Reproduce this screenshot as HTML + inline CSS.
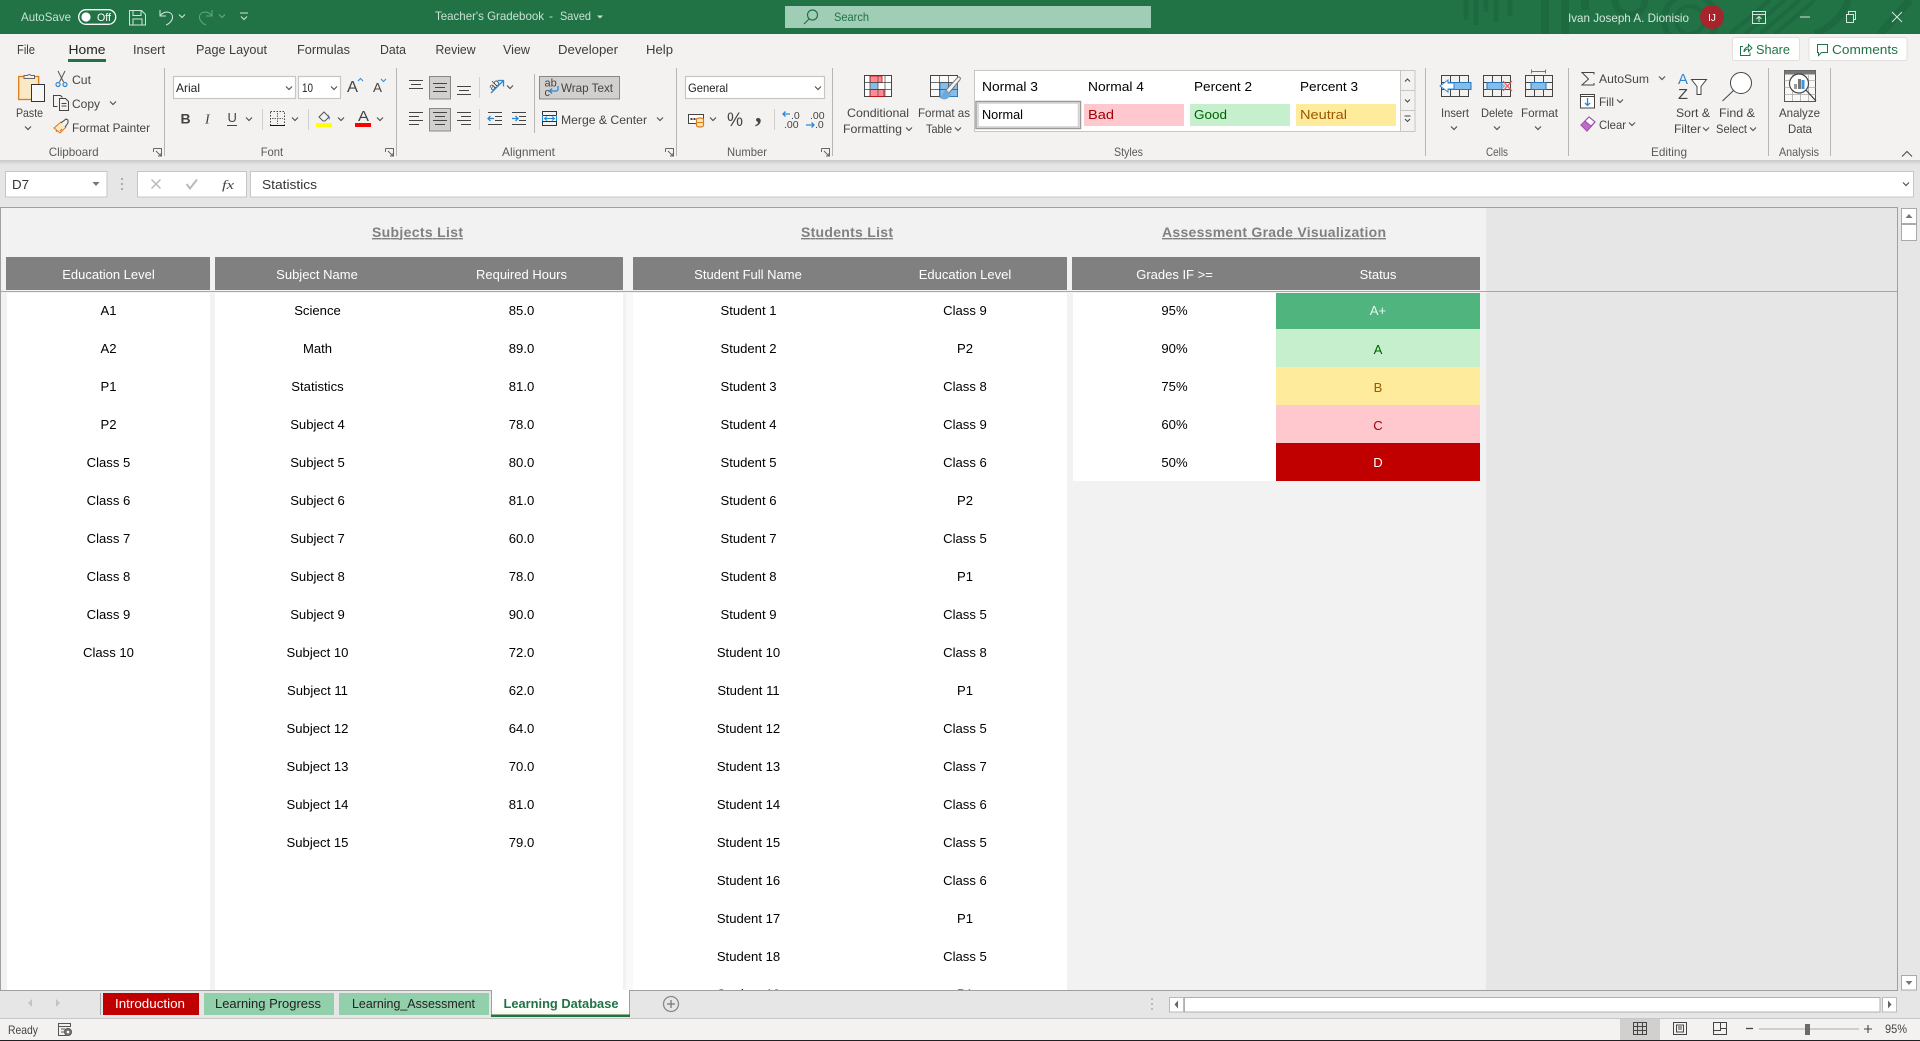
<!DOCTYPE html>
<html lang="en"><head><meta charset="utf-8"><title>Teacher's Gradebook - Excel</title>
<style>
html,body{margin:0;padding:0;width:1920px;height:1041px;overflow:hidden;background:#e6e6e6}
svg{display:block;font-family:"Liberation Sans",Arial,sans-serif}
.r{font-size:12px;fill:#444}
.l{font-size:12px;fill:#5a5a5a}
.t{font-size:12px;fill:#c9e0d3}
.m{font-size:13px;fill:#3c3c3c}
.d{font-size:13.1px;fill:#000;text-anchor:middle}
.h{font-size:13px;fill:#fff;text-anchor:middle}
.g{font-size:14px;font-weight:bold;fill:#808080;text-anchor:middle;text-decoration:underline}
.st{font-size:13px;fill:#000}
.ln{fill:none;stroke:#444;stroke-width:1}
.bl{fill:none;stroke:#2b88d8;stroke-width:1.3}
</style></head><body>
<svg width="1920" height="1041" viewBox="0 0 1920 1041" xmlns="http://www.w3.org/2000/svg">
<defs>
<path id="c" d="M-3 -1.5L0 1.5L3 -1.5" fill="none" stroke="#555" stroke-width="1.2"/>
<path id="cw" d="M-3 -1.5L0 1.5L3 -1.5" fill="none" stroke="#cfe3d8" stroke-width="1.1"/>
<path id="lc" d="M0.5 0.5H8.5V8.5M3 3L8 8M5 8H8V5M0.5 0.5V4M0.5 .5" fill="none" stroke="#666" stroke-width="1"/>
</defs>

<!-- title bar -->
<rect width="1920" height="34" fill="#217346"/>
<g fill="none" stroke="#1e6a40" stroke-width="5">
<path d="M1466 0V20M1476 0V25M1486 0V12M1496 0V22M1510 0V16"/>
<path d="M1545 0V34M1565 0V34M1585 0V10" stroke-width="8"/>
<path d="M1615 0a15 15 0 0 0 30 0" stroke-width="7"/>
<circle cx="1690" cy="20" r="26" stroke-width="6"/>
<circle cx="1690" cy="20" r="14" stroke-width="4"/>
<path d="M1730 34L1770 0M1745 34L1785 0M1760 34L1800 0M1775 34L1815 0" stroke-width="4"/>
<path d="M1815 34C1835 25 1845 12 1848 0" stroke-width="7"/>
<path d="M1880 34L1910 0" stroke-width="8"/>
</g>
<text class="t" x="21" y="21" textLength="50" lengthAdjust="spacingAndGlyphs">AutoSave</text>
<rect x="78.7" y="9.7" width="37" height="14.6" rx="7.3" fill="none" stroke="#fff" stroke-width="1.3"/>
<circle cx="86" cy="17" r="4.6" fill="#fff"/>
<text x="97" y="21" font-size="11" fill="#fff" textLength="14" lengthAdjust="spacingAndGlyphs">Off</text>
<path d="M129.5 10.5h12l4 4v10.5h-16zM133 10.5v5h8v-5M133 25v-6h9v6" fill="none" stroke="#cfe3d8"/>
<path d="M160 10v6h6M160 16C164 10 173 11 172.500 18C172 21 169 24 166 25" fill="none" stroke="#cfe3d8" stroke-width="1.1"/>
<use href="#cw" x="182" y="16"/>
<path d="M212 10v6h-6M212 16C208 10 199 11 199.500 18C200 21 203 24 206 25" fill="none" stroke="#63a382" stroke-width="1.1"/>
<use href="#cw" x="222" y="16" opacity=".45"/>
<path d="M240 13h8" stroke="#cfe3d8"/><use href="#cw" x="244" y="18"/>
<text class="t" x="435" y="20" textLength="109" lengthAdjust="spacingAndGlyphs">Teacher's Gradebook</text>
<text class="t" x="549" y="20">-</text>
<text class="t" x="560" y="20" textLength="31" lengthAdjust="spacingAndGlyphs">Saved</text>
<path d="M597 15.500h6l-3 3z" fill="#cfe3d8"/>
<rect x="785" y="6" width="366" height="22" fill="#a0cdb5"/>
<circle cx="812.500" cy="15" r="5" fill="none" stroke="#217346" stroke-width="1.2"/>
<path d="M809 19l-5 5" stroke="#217346" stroke-width="1.2"/>
<text x="834" y="21" font-size="12" fill="#217346" textLength="35" lengthAdjust="spacingAndGlyphs">Search</text>
<text x="1568" y="22" font-size="12" fill="#d5e6dc" textLength="121" lengthAdjust="spacingAndGlyphs">Ivan Joseph A. Dionisio</text>
<circle cx="1712" cy="17" r="12" fill="#a4262c"/>
<text x="1712" y="21" font-size="10" fill="#fff" text-anchor="middle">IJ</text>
<path d="M1752.500 11.500h13v12h-13zM1752.500 14.500h13M1759 22v-5M1756.500 19l2.500-2.500 2.500 2.500" fill="none" stroke="#d5e6dc"/>
<path d="M1800 17h10" stroke="#d5e6dc"/>
<path d="M1846.500 14.500h7v8h-7zM1848.500 14v-2.500h7v8h-2" fill="none" stroke="#d5e6dc"/>
<path d="M1892 12l10 10M1902 12l-10 10" stroke="#d5e6dc"/>

<!-- ribbon -->
<rect y="34" width="1920" height="126" fill="#f3f2f1"/>
<linearGradient id="sh" x1="0" y1="0" x2="0" y2="1"><stop offset="0" stop-color="#c9c9c9"/><stop offset="1" stop-color="#e6e6e6"/></linearGradient>
<rect y="160" width="1920" height="5" fill="url(#sh)"/>
<g class="m">
<text class="m" x="17" y="54" textLength="18" lengthAdjust="spacingAndGlyphs">File</text>
<text class="m" x="68.500" y="54" textLength="37" lengthAdjust="spacingAndGlyphs" style="fill:#222">Home</text>
<text class="m" x="133" y="54" textLength="32" lengthAdjust="spacingAndGlyphs">Insert</text>
<text class="m" x="196" y="54" textLength="71" lengthAdjust="spacingAndGlyphs">Page Layout</text>
<text class="m" x="297" y="54" textLength="53" lengthAdjust="spacingAndGlyphs">Formulas</text>
<text class="m" x="380" y="54" textLength="26" lengthAdjust="spacingAndGlyphs">Data</text>
<text class="m" x="435.500" y="54" textLength="40" lengthAdjust="spacingAndGlyphs">Review</text>
<text class="m" x="503" y="54" textLength="27" lengthAdjust="spacingAndGlyphs">View</text>
<text class="m" x="558" y="54" textLength="60" lengthAdjust="spacingAndGlyphs">Developer</text>
<text class="m" x="646" y="54" textLength="27" lengthAdjust="spacingAndGlyphs">Help</text>
</g>
<rect x="68" y="59" width="38" height="3" fill="#217346"/>
<rect x="1732.500" y="37.500" width="67" height="23" rx="2" fill="#fff" stroke="#e1dfdd"/>
<rect x="1809" y="37.500" width="98" height="23" rx="2" fill="#fff" stroke="#e1dfdd"/>
<path d="M1743 46.500h-2.500v9h9.500v-3M1744 52c0-3 2-5 4.500-5v-2.500l3.500 3.500-3.500 3.500v-2.500c-2 0-3.500 1-4.500 3z" fill="none" stroke="#217346"/>
<text x="1756" y="54" font-size="13" fill="#217346" textLength="34" lengthAdjust="spacingAndGlyphs">Share</text>
<path d="M1817.500 44.500h10v8h-6l-3 3v-3h-1z" fill="none" stroke="#217346"/>
<text x="1832" y="54" font-size="13" fill="#217346" textLength="66" lengthAdjust="spacingAndGlyphs">Comments</text>

<!-- separators -->
<g stroke="#b8b6b4">
<path d="M164.500 68V156M396.500 68V156M676.500 68V156M832.500 68V156M1425.500 68V156M1568.500 68V156M1768.500 68V156M1830.500 68V156"/>
<path d="M534.500 74V133" />
<path d="M262.500 109V130M308.500 109V130M479.500 77V98M479.500 109V130M774.500 109V130" stroke="#d2d0ce"/>
</g>

<!-- clipboard -->
<rect x="18.700" y="76.500" width="20" height="23" fill="#fbe8c4" stroke="#e07b14" stroke-width="1.3"/>
<rect x="31.500" y="84.500" width="13" height="17" fill="#f7f7f7" stroke="#333"/>
<path d="M24 78.500v-3h3.500a2 2 0 0 1 3.500 0h3.500v3z" fill="#f3f2f1" stroke="#666"/>
<text class="r" x="16" y="117" textLength="27" lengthAdjust="spacingAndGlyphs">Paste</text>
<use href="#c" x="28" y="128"/>
<path d="M58 71l5.500 11M65 71l-5.500 11" stroke="#555" fill="none"/>
<circle cx="58" cy="84.500" r="2" fill="none" stroke="#2b88d8" stroke-width="1.2"/>
<circle cx="65" cy="84.500" r="2" fill="none" stroke="#2b88d8" stroke-width="1.2"/>
<text class="r" x="72" y="84" textLength="19" lengthAdjust="spacingAndGlyphs">Cut</text>
<path d="M57.500 106.500h-4v-11h7l2 2M59.500 98.500h6l3 3v9h-9zM61.500 103.500h5M61.500 106h5" fill="none" stroke="#444"/>
<text class="r" x="72" y="108" textLength="28" lengthAdjust="spacingAndGlyphs">Copy</text>
<use href="#c" x="113" y="103"/>
<path d="M54 128l7-6 5 5-6 6z" fill="#fbe8c4" stroke="#d9731a"/>
<path d="M57 130l-1 2M60 131l2-2" stroke="#d9731a"/>
<path d="M61 123l5-4 2 1 0 3-3 4" fill="#f3f2f1" stroke="#444"/>
<text class="r" x="72" y="132" textLength="78" lengthAdjust="spacingAndGlyphs">Format Painter</text>
<text class="l" x="48.700" y="156" textLength="50" lengthAdjust="spacingAndGlyphs">Clipboard</text>
<use href="#lc" x="153" y="148"/>

<!-- font -->
<rect x="173.500" y="76.500" width="122" height="22" fill="#fff" stroke="#c8c6c4" stroke-width="1.2"/>
<text x="176" y="92" font-size="12" fill="#222" textLength="24" lengthAdjust="spacingAndGlyphs">Arial</text>
<use href="#c" x="289" y="88"/>
<rect x="298.500" y="76.500" width="42" height="22" fill="#fff" stroke="#c8c6c4" stroke-width="1.2"/>
<text x="302" y="92" font-size="12" fill="#222" textLength="11" lengthAdjust="spacingAndGlyphs">10</text>
<use href="#c" x="334" y="88"/>
<text x="347" y="92" font-size="16" fill="#444" textLength="11" lengthAdjust="spacingAndGlyphs">A</text>
<path d="M358 81l2.500-2.500 2.500 2.500" fill="none" stroke="#2b88d8"/>
<text x="373" y="92" font-size="13" fill="#444" textLength="9" lengthAdjust="spacingAndGlyphs">A</text>
<path d="M381 79l2.500 2.500 2.500-2.500" fill="none" stroke="#2b88d8"/>
<text x="180.500" y="123.500" font-size="14" font-weight="bold" fill="#444">B</text>
<text x="205" y="123.500" font-size="14" font-style="italic" fill="#444" font-family="Liberation Serif">I</text>
<text x="227.500" y="122" font-size="13" fill="#444">U</text><path d="M227 125.500h10" stroke="#444"/>
<use href="#c" x="249" y="119"/>
<path d="M270.500 111.500h14v14h-14z" fill="none" stroke="#444" stroke-dasharray="1.500 1.500"/>
<path d="M270 125.500h15" stroke="#111"/>
<path d="M277.500 113v11M272 118.500h11" stroke="#666" stroke-dasharray="1.500 1"/>
<use href="#c" x="295" y="119"/>
<path d="M319 117l5-5 5 5-4 4h-2z" fill="none" stroke="#555"/>
<path d="M328 114l2 4-1 2z" fill="#2b6ca8"/>
<rect x="316" y="123" width="16" height="4" fill="#ffff00"/>
<use href="#c" x="341" y="119"/>
<text x="358" y="121" font-size="15" fill="#444" textLength="11" lengthAdjust="spacingAndGlyphs">A</text>
<rect x="355" y="123" width="16" height="4" fill="#f00"/>
<use href="#c" x="380" y="119"/>
<text class="l" x="260.700" y="156" textLength="22.500" lengthAdjust="spacingAndGlyphs">Font</text>
<use href="#lc" x="385" y="148"/>

<!-- alignment -->
<rect x="429.500" y="76.500" width="21" height="22.500" fill="#d2d0ce" stroke="#8a8886"/>
<rect x="429.500" y="108.500" width="21" height="22.500" fill="#d2d0ce" stroke="#8a8886"/>
<rect x="539.500" y="76.500" width="80" height="22.500" fill="#d2d0ce" stroke="#8a8886"/>
<path class="ln" d="M409 80.500h14M411 84.500h10M409 88.500h14
M433 83.500h14M435 87.500h10M433 91.500h14
M457 86.500h14M459 90.500h10M457 94.500h14
M409 112.500h14M409 116.500h10M409 120.500h14M409 124.500h10
M433 112.500h14M435 116.500h10M433 120.500h14M435 124.500h10
M457 112.500h14M461 116.500h10M457 120.500h14M461 124.500h10
M488 112.500h14M495 116.500h7M495 120.500h7M488 124.500h14
M512 112.500h14M519 116.500h7M519 120.500h7M512 124.500h14"/>
<path class="bl" d="M488 118.500h6M490.500 116l-2.500 2.500 2.500 2.500M512 118.500h6M515.500 116l2.500 2.500-2.500 2.500"/>
<text x="487" y="90" font-size="10" fill="#444" transform="rotate(-45 491 84)">ab</text>
<path class="bl" d="M491 93l12-12M497.500 80.500h6v6"/>
<use href="#c" x="510" y="87"/>
<text x="544.500" y="86.500" font-size="11" fill="#444">ab</text>
<text x="544.500" y="96" font-size="11" fill="#444">c</text>
<path class="bl" d="M558 86v3a2 2 0 0 1-2 2h-6M552 88.500l-2.500 2.500 2.500 2.500"/>
<text class="r" x="561" y="92" textLength="52" lengthAdjust="spacingAndGlyphs">Wrap Text</text>
<path class="ln" d="M542.500 111.500h14v14h-14zM542.500 115.500h14M542.500 121.500h14" style="stroke:#333"/>
<path d="M545 118.500h9M547 116.500l-2.500 2 2.500 2M552 116.500l2.500 2-2.500 2" fill="none" stroke="#1f8ad6"/>
<path d="M542.500 115v6M556.500 115v6" stroke="#1f8ad6"/>
<text class="r" x="561" y="124" textLength="86" lengthAdjust="spacingAndGlyphs">Merge &amp; Center</text>
<use href="#c" x="660" y="119"/>
<text class="l" x="502" y="156" textLength="53" lengthAdjust="spacingAndGlyphs">Alignment</text>
<use href="#lc" x="665" y="148"/>

<!-- number -->
<rect x="685.500" y="76.500" width="139" height="22" fill="#fff" stroke="#c8c6c4" stroke-width="1.2"/>
<text x="688" y="92" font-size="12" fill="#222" textLength="40" lengthAdjust="spacingAndGlyphs">General</text>
<use href="#c" x="818" y="88"/>
<rect x="688.500" y="114.500" width="15" height="9" fill="#fff" stroke="#444"/>
<path d="M690.500 119h11" stroke="#444" stroke-width="2" stroke-dasharray="2 1"/>
<path d="M696.500 119.500a3.500 1.500 0 0 1 7 0v6a3.500 1.500 0 0 1-7 0z" fill="#fbe8c4" stroke="#e07b14" stroke-width="1.200"/>
<path d="M696.500 122.500h7" stroke="#e07b14"/>
<use href="#c" x="713" y="119"/>
<text x="727" y="126" font-size="19" fill="#444" textLength="16" lengthAdjust="spacingAndGlyphs">%</text>
<text x="755" y="122" font-size="27" font-weight="bold" fill="#444" font-family="Liberation Serif">,</text>
<text x="791" y="119" font-size="10.500" fill="#444">.0</text>
<text x="784" y="128" font-size="10.500" fill="#444">.00</text>
<path class="bl" d="M783 114h7M785.500 111.500l-2.500 2.500 2.500 2.500"/>
<text x="810" y="119" font-size="10.500" fill="#444">.00</text>
<text x="815" y="128" font-size="10.500" fill="#444">.0</text>
<path class="bl" d="M806 125h8M811.500 122.500l2.500 2.500-2.500 2.500"/>
<text class="l" x="727" y="156" textLength="40" lengthAdjust="spacingAndGlyphs">Number</text>
<use href="#lc" x="821" y="148"/>

<!-- conditional / format table -->
<rect x="864.500" y="75.500" width="27" height="21" fill="#fff" stroke="#444"/>
<rect x="870" y="76" width="12" height="6.500" fill="#ff8a94" stroke="#c00" stroke-width=".8"/>
<rect x="870" y="82.500" width="8" height="7" fill="#85bde8"/>
<rect x="870" y="89.500" width="14" height="7" fill="#ff8a94" stroke="#c00" stroke-width=".8"/>
<path d="M864.500 82.500h27M864.500 89.500h27M870 75.500v21M878 75.500v21M885 75.500v21" stroke="#444" stroke-width=".7" fill="none"/>
<text class="r" x="847" y="117" textLength="62" lengthAdjust="spacingAndGlyphs">Conditional</text>
<text class="r" x="843" y="133" textLength="59" lengthAdjust="spacingAndGlyphs">Formatting</text>
<use href="#c" x="909" y="129"/>
<rect x="930.500" y="75.500" width="27" height="21" fill="#fafafa" stroke="#444"/>
<rect x="940" y="82.500" width="17.500" height="14" fill="#85bde8" stroke="#1e78c4" stroke-width=".8"/>
<path d="M930.500 82.500h27M930.500 89.500h27M939.500 75.500v21M948.500 75.500v21" stroke="#444" stroke-width=".7" fill="none"/>
<path d="M958 77c3 0 3 2 1 4l-10 12-3-3z" fill="#f3f2f1" stroke="#777"/>
<path d="M946 90c-3 1-2 5-7 7 4 4 10 3 12-3z" fill="#6ea9da"/>
<text class="r" x="918" y="117" textLength="52" lengthAdjust="spacingAndGlyphs">Format as</text>
<text class="r" x="926" y="133" textLength="26" lengthAdjust="spacingAndGlyphs">Table</text>
<use href="#c" x="958" y="129"/>

<!-- styles gallery -->
<rect x="974.500" y="70.500" width="440.500" height="61" fill="#fff" stroke="#c8c6c4"/>
<text class="st" x="982" y="91" textLength="56" lengthAdjust="spacingAndGlyphs">Normal 3</text>
<text class="st" x="1088" y="91" textLength="56" lengthAdjust="spacingAndGlyphs">Normal 4</text>
<text class="st" x="1194" y="91" textLength="58" lengthAdjust="spacingAndGlyphs">Percent 2</text>
<text class="st" x="1300" y="91" textLength="58" lengthAdjust="spacingAndGlyphs">Percent 3</text>
<rect x="976" y="101.500" width="104.500" height="27" fill="#fff" stroke="#9a9a9a" stroke-width="1.500"/>
<rect x="978" y="103" width="100.500" height="24" fill="none" stroke="#d2d0ce" stroke-width="1.500"/>
<text class="st" x="982" y="119" textLength="41" lengthAdjust="spacingAndGlyphs">Normal</text>
<rect x="1084" y="104" width="100" height="22" fill="#ffc7ce"/>
<text class="st" x="1088" y="119" textLength="26" lengthAdjust="spacingAndGlyphs" style="fill:#9c0006">Bad</text>
<rect x="1190" y="104" width="100" height="22" fill="#c6efce"/>
<text class="st" x="1194" y="119" textLength="33" lengthAdjust="spacingAndGlyphs" style="fill:#006100">Good</text>
<rect x="1296" y="104" width="100" height="22" fill="#ffeb9c"/>
<text class="st" x="1300" y="119" textLength="47" lengthAdjust="spacingAndGlyphs" style="fill:#9c5700">Neutral</text>
<g fill="#f3f2f1" stroke="#c8c6c4">
<rect x="1400.500" y="70.500" width="14.500" height="20"/>
<rect x="1400.500" y="90.500" width="14.500" height="20"/>
<rect x="1400.500" y="110.500" width="14.500" height="21"/>
</g>
<path d="M1405 81.500l2.500-2.500 2.500 2.500M1405 99.500l2.500 2.500 2.500-2.500M1405 119l2.500 2.500 2.500-2.500" fill="none" stroke="#444"/>
<path d="M1404.500 116h6" stroke="#444"/>
<text class="l" x="1114" y="156" textLength="29" lengthAdjust="spacingAndGlyphs">Styles</text>

<!-- cells -->
<g fill="none" stroke="#444">
<path d="M1441.500 75.500h27v21h-27zM1441.500 82.500h27M1441.500 89.500h27M1450.500 75.500v21M1459.500 75.500v21"/>
<path d="M1483.500 75.500h27v21h-27zM1483.500 82.500h27M1483.500 89.500h27M1492.500 75.500v21M1501.500 75.500v21"/>
<path d="M1525.500 75.500h27v21h-27zM1525.500 82.500h27M1525.500 89.500h27M1534.500 75.500v21M1543.500 75.500v21"/>
</g>
<rect x="1448" y="82.500" width="23" height="7" fill="#85bde8" stroke="#1e78c4"/>
<path d="M1448 80l-8 6 8 6v-3h6v-6h-6z" fill="#fff" stroke="#2b88d8"/>
<rect x="1487" y="82.500" width="15" height="7" fill="#85bde8" stroke="#1e78c4"/>
<path d="M1502 82.500l4 3.500-4 3.500z" fill="#85bde8"/>
<path d="M1503 81l9 10M1512 81l-9 10" stroke="#ee5a5a" stroke-width="1.200"/>
<rect x="1531" y="82.500" width="15" height="7" fill="#85bde8" stroke="#1e78c4"/>
<path d="M1531 71.500h15M1531.500 69.500v4M1545.500 69.500v4" stroke="#2b88d8"/>
<text class="r" x="1441" y="117" textLength="28" lengthAdjust="spacingAndGlyphs">Insert</text>
<use href="#c" x="1454" y="128"/>
<text class="r" x="1481" y="117" textLength="32" lengthAdjust="spacingAndGlyphs">Delete</text>
<use href="#c" x="1497" y="128"/>
<text class="r" x="1521" y="117" textLength="37" lengthAdjust="spacingAndGlyphs">Format</text>
<use href="#c" x="1538" y="128"/>
<text class="l" x="1486" y="156" textLength="22" lengthAdjust="spacingAndGlyphs">Cells</text>

<!-- editing -->
<path d="M1594 74.500v-2h-12l6.500 6.500-6.500 6h12v-2" fill="none" stroke="#444"/>
<text class="r" x="1599" y="83" textLength="50" lengthAdjust="spacingAndGlyphs">AutoSum</text>
<use href="#c" x="1662" y="78"/>
<rect x="1580.500" y="94.500" width="14" height="13.500" fill="#fff" stroke="#444"/>
<path d="M1580.500 96.500h14" stroke="#444"/>
<path class="bl" d="M1587.500 98v7.500M1585 103l2.500 2.500 2.500-2.500"/>
<text class="r" x="1599" y="106" textLength="15" lengthAdjust="spacingAndGlyphs">Fill</text>
<use href="#c" x="1620" y="101"/>
<path d="M1581 125l8-8 6 5-8 9z" fill="#d9a8de" stroke="#a347b0" stroke-width="1.200"/>
<path d="M1586 120l6 5-5 6-6-6z" fill="#b45fc0" opacity=".8"/>
<path d="M1589 117l6 5-4 4-6-5z" fill="#fff" stroke="#a347b0"/>
<text class="r" x="1599" y="129" textLength="27" lengthAdjust="spacingAndGlyphs">Clear</text>
<use href="#c" x="1632" y="124"/>
<text x="1678" y="84" font-size="15" fill="#2b88d8" textLength="10" lengthAdjust="spacingAndGlyphs">A</text>
<text x="1678" y="99" font-size="15" fill="#444" textLength="10" lengthAdjust="spacingAndGlyphs">Z</text>
<path d="M1691.500 79.500h15l-5.500 7v8h-4v-8z" fill="#fff" stroke="#444"/>
<text class="r" x="1676" y="117" textLength="34" lengthAdjust="spacingAndGlyphs">Sort &amp;</text>
<text class="r" x="1674" y="133" textLength="27" lengthAdjust="spacingAndGlyphs">Filter</text>
<use href="#c" x="1706" y="129"/>
<circle cx="1741" cy="83" r="10.500" fill="#fff" stroke="#444"/>
<path d="M1733.500 90.500l-11 10.500" stroke="#444"/>
<text class="r" x="1719" y="117" textLength="36" lengthAdjust="spacingAndGlyphs">Find &amp;</text>
<text class="r" x="1716" y="133" textLength="31" lengthAdjust="spacingAndGlyphs">Select</text>
<use href="#c" x="1753" y="129"/>
<text class="l" x="1651" y="156" textLength="36" lengthAdjust="spacingAndGlyphs">Editing</text>

<!-- analyze -->
<rect x="1784.500" y="70.500" width="31" height="31" fill="#f8f8f8" stroke="#555"/>
<rect x="1784.500" y="70.500" width="31" height="4" fill="#777"/>
<path d="M1784.500 80.500h31M1784.500 87.500h31M1784.500 94.500h31M1792.500 75v26M1800.500 75v26M1808.500 75v26" stroke="#aaa" stroke-width=".8"/>
<circle cx="1799" cy="83.500" r="9.500" fill="#fff" stroke="#444" stroke-width="1.200"/>
<rect x="1794" y="84" width="3" height="5" fill="#999"/><rect x="1798" y="79" width="3" height="10" fill="#777"/><rect x="1801.500" y="80" width="3" height="9" fill="#3a96dd"/>
<path d="M1806 90l10 11" stroke="#444" stroke-width="1.300"/>
<text class="r" x="1779" y="117" textLength="41" lengthAdjust="spacingAndGlyphs">Analyze</text>
<text class="r" x="1788" y="133" textLength="24" lengthAdjust="spacingAndGlyphs">Data</text>
<text class="l" x="1779" y="156" textLength="40" lengthAdjust="spacingAndGlyphs">Analysis</text>
<path d="M1902 156.500l5-5 5 5" fill="none" stroke="#444"/>

<!-- formula bar -->
<rect x="5.500" y="171.500" width="101.500" height="25.500" fill="#fff" stroke="#c8c6c4"/>
<text x="12" y="189" font-size="13" fill="#333" textLength="17" lengthAdjust="spacingAndGlyphs">D7</text>
<path d="M92.500 182h7l-3.500 4z" fill="#777"/>
<path d="M122 178v2M122 183v2M122 188v2" stroke="#999" stroke-width="1.500"/>
<rect x="137.500" y="171.500" width="109" height="25.500" fill="#fff" stroke="#c8c6c4"/>
<path d="M151.500 179.500l9 9M160.500 179.500l-9 9" stroke="#bbb" stroke-width="1.500"/>
<path d="M186.500 184l3.500 4.500 7-9" fill="none" stroke="#bbb" stroke-width="2"/>
<text x="222" y="189" font-size="13" font-style="italic" font-family="Liberation Serif" fill="#444" textLength="12" lengthAdjust="spacingAndGlyphs">fx</text>
<rect x="250.500" y="171.500" width="1663" height="25.500" fill="#fff" stroke="#c8c6c4"/>
<text x="262" y="189" font-size="13" fill="#333" textLength="55" lengthAdjust="spacingAndGlyphs">Statistics</text>
<use href="#c" x="1906" y="184"/>

<!-- sheet -->
<rect x="0" y="207" width="1898" height="784" fill="#e6e6e6"/>
<rect x="1" y="208" width="1485" height="782" fill="#f2f2f2"/>
<path d="M0 207.500H1898M0.500 207V990M1897.500 207V990" stroke="#a0a0a0"/>
<rect x="7" y="293" width="203" height="697" fill="#fff"/>
<rect x="215" y="293" width="408" height="697" fill="#fff"/>
<rect x="626" y="293" width="7" height="697" fill="#f9f9f9"/>
<rect x="633" y="293" width="434" height="697" fill="#fff"/>
<rect x="1073" y="293" width="203" height="188" fill="#fff"/>
<rect x="1276" y="293" width="204" height="36" fill="#50b47f"/>
<rect x="1276" y="329" width="204" height="38" fill="#c6efce"/>
<rect x="1276" y="367" width="204" height="38" fill="#ffeb9c"/>
<rect x="1276" y="405" width="204" height="38" fill="#ffc7ce"/>
<rect x="1276" y="443" width="204" height="38" fill="#c00000"/>
<g fill="#808080">
<rect x="6" y="257" width="204" height="33"/>
<rect x="215" y="257" width="408" height="33"/>
<rect x="633" y="257" width="434" height="33"/>
<rect x="1072" y="257" width="408" height="33"/>
</g>
<path d="M1 291.500H1897" stroke="#a8a8a8"/>

<text class="g" x="417.500" y="237" textLength="91" lengthAdjust="spacing">Subjects List</text>
<text class="g" x="847" y="237" textLength="92" lengthAdjust="spacing">Students List</text>
<text class="g" x="1274" y="237" textLength="224" lengthAdjust="spacing">Assessment Grade Visualization</text>

<text class="h" x="108.500" y="279">Education Level</text>
<text class="h" x="317" y="279">Subject Name</text>
<text class="h" x="521.500" y="279">Required Hours</text>
<text class="h" x="748" y="279">Student Full Name</text>
<text class="h" x="965" y="279">Education Level</text>
<text class="h" x="1174.500" y="279">Grades IF &gt;=</text>
<text class="h" x="1378" y="279">Status</text>

<g class="d">
<text class="d" x="108.500" y="315">A1</text><text class="d" x="108.500" y="353">A2</text><text class="d" x="108.500" y="391">P1</text><text class="d" x="108.500" y="429">P2</text><text class="d" x="108.500" y="467">Class 5</text><text class="d" x="108.500" y="505">Class 6</text><text class="d" x="108.500" y="543">Class 7</text><text class="d" x="108.500" y="581">Class 8</text><text class="d" x="108.500" y="619">Class 9</text><text class="d" x="108.500" y="657">Class 10</text>

<text class="d" x="317.500" y="315">Science</text><text class="d" x="317.500" y="353">Math</text><text class="d" x="317.500" y="391">Statistics</text><text class="d" x="317.500" y="429">Subject 4</text><text class="d" x="317.500" y="467">Subject 5</text><text class="d" x="317.500" y="505">Subject 6</text><text class="d" x="317.500" y="543">Subject 7</text><text class="d" x="317.500" y="581">Subject 8</text><text class="d" x="317.500" y="619">Subject 9</text><text class="d" x="317.500" y="657">Subject 10</text><text class="d" x="317.500" y="695">Subject 11</text><text class="d" x="317.500" y="733">Subject 12</text><text class="d" x="317.500" y="771">Subject 13</text><text class="d" x="317.500" y="809">Subject 14</text><text class="d" x="317.500" y="847">Subject 15</text>

<text class="d" x="521.500" y="315">85.0</text><text class="d" x="521.500" y="353">89.0</text><text class="d" x="521.500" y="391">81.0</text><text class="d" x="521.500" y="429">78.0</text><text class="d" x="521.500" y="467">80.0</text><text class="d" x="521.500" y="505">81.0</text><text class="d" x="521.500" y="543">60.0</text><text class="d" x="521.500" y="581">78.0</text><text class="d" x="521.500" y="619">90.0</text><text class="d" x="521.500" y="657">72.0</text><text class="d" x="521.500" y="695">62.0</text><text class="d" x="521.500" y="733">64.0</text><text class="d" x="521.500" y="771">70.0</text><text class="d" x="521.500" y="809">81.0</text><text class="d" x="521.500" y="847">79.0</text>

<text class="d" x="748.500" y="315">Student 1</text><text class="d" x="748.500" y="353">Student 2</text><text class="d" x="748.500" y="391">Student 3</text><text class="d" x="748.500" y="429">Student 4</text><text class="d" x="748.500" y="467">Student 5</text><text class="d" x="748.500" y="505">Student 6</text><text class="d" x="748.500" y="543">Student 7</text><text class="d" x="748.500" y="581">Student 8</text><text class="d" x="748.500" y="619">Student 9</text><text class="d" x="748.500" y="657">Student 10</text><text class="d" x="748.500" y="695">Student 11</text><text class="d" x="748.500" y="733">Student 12</text><text class="d" x="748.500" y="771">Student 13</text><text class="d" x="748.500" y="809">Student 14</text><text class="d" x="748.500" y="847">Student 15</text><text class="d" x="748.500" y="885">Student 16</text><text class="d" x="748.500" y="923">Student 17</text><text class="d" x="748.500" y="961">Student 18</text><text class="d" x="748.500" y="998.500">Student 19</text>

<text class="d" x="965" y="315">Class 9</text><text class="d" x="965" y="353">P2</text><text class="d" x="965" y="391">Class 8</text><text class="d" x="965" y="429">Class 9</text><text class="d" x="965" y="467">Class 6</text><text class="d" x="965" y="505">P2</text><text class="d" x="965" y="543">Class 5</text><text class="d" x="965" y="581">P1</text><text class="d" x="965" y="619">Class 5</text><text class="d" x="965" y="657">Class 8</text><text class="d" x="965" y="695">P1</text><text class="d" x="965" y="733">Class 5</text><text class="d" x="965" y="771">Class 7</text><text class="d" x="965" y="809">Class 6</text><text class="d" x="965" y="847">Class 5</text><text class="d" x="965" y="885">Class 6</text><text class="d" x="965" y="923">P1</text><text class="d" x="965" y="961">Class 5</text><text class="d" x="965" y="998.500">P1</text>

<text class="d" x="1174.500" y="315">95%</text><text class="d" x="1174.500" y="353">90%</text><text class="d" x="1174.500" y="391">75%</text><text class="d" x="1174.500" y="429">60%</text><text class="d" x="1174.500" y="467">50%</text>
</g>
<text class="d" x="1378" y="315" style="fill:#e8f8ee">A+</text>
<text class="d" x="1378" y="354" style="fill:#006100">A</text>
<text class="d" x="1378" y="392" style="fill:#9c5700">B</text>
<text class="d" x="1378" y="430" style="fill:#9c0006">C</text>
<text class="d" x="1378" y="467" style="fill:#fff">D</text>

<!-- vertical scrollbar -->
<rect x="1898" y="207" width="22" height="784" fill="#e6e6e6"/>
<rect x="1901.500" y="208.500" width="15" height="15" fill="#fff" stroke="#aaa"/>
<path d="M1905.500 218l3.500-4 3.500 4z" fill="#777"/>
<rect x="1901.500" y="224.500" width="15" height="16" fill="#fff" stroke="#aaa"/>
<rect x="1901.500" y="975.500" width="15" height="14.500" fill="#fff" stroke="#aaa"/>
<path d="M1905.500 981l3.500 4 3.500-4z" fill="#777"/>

<!-- sheet tabs -->
<rect y="991" width="1920" height="27" fill="#e6e6e6"/>
<path d="M0 990.500H1898" stroke="#a0a0a0"/>
<path d="M32 999v8l-4-4zM56 999v8l4-4z" fill="#c4c4c4"/>
<path d="M100.500 993V1015" stroke="#a8a8a8"/>
<rect x="103" y="993" width="96" height="22" fill="#c00000"/>
<text x="115" y="1008" font-size="13" fill="#fff" textLength="70" lengthAdjust="spacingAndGlyphs">Introduction</text>
<rect x="204" y="993" width="130" height="22" fill="#92d0ac"/>
<text x="215" y="1008" font-size="13" fill="#222" textLength="106" lengthAdjust="spacingAndGlyphs">Learning Progress</text>
<rect x="339" y="993" width="150" height="22" fill="#92d0ac"/>
<text x="352" y="1008" font-size="13" fill="#222" textLength="123" lengthAdjust="spacingAndGlyphs">Learning_Assessment</text>
<linearGradient id="at" x1="0" y1="0" x2="0" y2="1"><stop offset="0" stop-color="#fff"/><stop offset=".7" stop-color="#fff"/><stop offset="1" stop-color="#fdf3df"/></linearGradient>
<rect x="491.500" y="990" width="138" height="26" fill="url(#at)"/>
<path d="M491.500 1016V990M629.500 1016V990" stroke="#a0a0a0"/>
<rect x="491" y="1014.500" width="139" height="2.500" fill="#217346"/>
<text x="503.500" y="1008" font-size="13" font-weight="bold" fill="#217346" textLength="115" lengthAdjust="spacingAndGlyphs">Learning Database</text>
<circle cx="671" cy="1004" r="7.500" fill="none" stroke="#888" stroke-width="1.300"/>
<path d="M667 1004h8M671 1000v8" stroke="#777" stroke-width="1.300"/>
<path d="M1152 998v2M1152 1003v2M1152 1008v2" stroke="#aaa" stroke-width="1.500"/>
<rect x="1169.500" y="997.500" width="14" height="14.500" fill="#fff" stroke="#bbb"/>
<path d="M1178 1000.500v8l-3.500-4z" fill="#666"/>
<rect x="1184.500" y="997.500" width="695.500" height="14.500" fill="#fff" stroke="#b0b0b0"/>
<rect x="1882.500" y="997.500" width="14" height="14.500" fill="#fff" stroke="#bbb"/>
<path d="M1888 1000.500v8l3.500-4z" fill="#666"/>

<!-- status bar -->
<rect y="1018" width="1920" height="22" fill="#f3f2f1"/>
<path d="M0 1018.500H1920" stroke="#c8c6c4"/>
<rect y="1040" width="1920" height="1" fill="#1f1f24"/>
<text x="8" y="1034" font-size="12" fill="#444" textLength="30" lengthAdjust="spacingAndGlyphs">Ready</text>
<path d="M58.500 1023.500h12v3h-12zM58.500 1026.500v9h8M61 1029h4M61 1032h3" fill="none" stroke="#555"/>
<circle cx="68" cy="1032" r="3.500" fill="#777" stroke="#555"/><circle cx="68" cy="1032" r="1.300" fill="#fff"/>
<rect x="1620" y="1019" width="40" height="21" fill="#d2d0ce"/>
<path d="M1633.500 1022.500h13v12h-13zM1633.500 1026.500h13M1633.500 1030.500h13M1637.500 1022.500v12M1642.500 1022.500v12" fill="none" stroke="#444"/>
<path d="M1673.500 1022.500h13v12h-13zM1676.500 1025h7v7h-7zM1678 1027h4M1678 1029h4" fill="none" stroke="#444"/>
<path d="M1713.500 1022.500h13v12h-13zM1713.500 1030.500h7v-8M1720.500 1028.500h6" fill="none" stroke="#444"/>
<path d="M1746 1028.500h7" stroke="#444" stroke-width="1.300"/>
<rect x="1759" y="1028.500" width="100" height="1" fill="#aaa"/>
<rect x="1805" y="1024" width="5" height="11" fill="#6a6a6a"/>
<path d="M1864 1029h8M1868 1025v8" stroke="#444" stroke-width="1.100"/>
<text x="1885" y="1033" font-size="12" fill="#444" textLength="22" lengthAdjust="spacingAndGlyphs">95%</text>
</svg>
</body></html>
